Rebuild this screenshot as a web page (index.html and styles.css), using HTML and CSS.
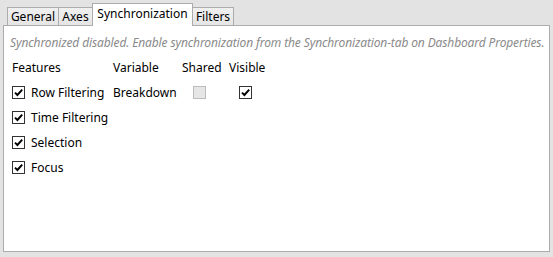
FILE: index.html
```html
<!DOCTYPE html>
<html lang="en">
<head>
    <meta charset="UTF-8">
    <title>Synchronization</title>
    <link rel="stylesheet" href="styles.css">
</head>
<body>
    <div class="window">
        <div class="tabstrip">
            <div class="tab tab-general">General</div>
            <div class="tab tab-axes">Axes</div>
            <div class="tab tab-sync selected">Synchronization</div>
            <div class="tab tab-filters">Filters</div>
        </div>

        <div class="panel">
            <p class="notice">Synchronized disabled. Enable synchronization from the Synchronization-tab on Dashboard Properties.</p>

            <div class="sync-grid">
                <div class="head">Features</div>
                <div class="head">Variable</div>
                <div class="head">Shared</div>
                <div class="head">Visible</div>

                <label class="feature"><span class="check on"></span>Row Filtering</label>
                <div class="cell">Breakdown</div>
                <div class="cell"><span class="check disabled shared-box"></span></div>
                <div class="cell"><span class="check on visible-box"></span></div>

                <label class="feature"><span class="check on"></span>Time Filtering</label>
                <div class="cell"></div>
                <div class="cell"></div>
                <div class="cell"></div>

                <label class="feature"><span class="check on"></span>Selection</label>
                <div class="cell"></div>
                <div class="cell"></div>
                <div class="cell"></div>

                <label class="feature"><span class="check on"></span>Focus</label>
                <div class="cell"></div>
                <div class="cell"></div>
                <div class="cell"></div>
            </div>
        </div>
    </div>
</body>
</html>
```

FILE: styles.css
```css
body {
    margin: 0;
    background-color: #e3e3e3;
    font-family: "Noto Sans", "Open Sans", sans-serif;
    font-size: 12px;
    color: #000;
}
.window {
    padding: 0 3px 6px 3px;
}
.tabstrip {
    display: flex;
    align-items: flex-end;
    height: 25px;
    padding-left: 4px;
}
.tab {
    height: 17px;
    line-height: 17px;
    border: 1px solid #acacac;
    border-bottom: none;
    background: linear-gradient(#f0f0f0, #e5e5e5);
    text-align: center;
    box-sizing: content-box;
    margin-right: -1px;
}
.tab-general { width: 50px; }
.tab-axes { width: 33px; }
.tab-sync { width: 99px; }
.tab-filters { width: 40px; }
.tab.selected {
    position: relative;
    z-index: 1;
    height: 22px;
    line-height: 20px;
    margin-bottom: -1px;
    background: #fff;
}
.panel {
    height: 225px;
    border: 1px solid #acacac;
    background: #fff;
    padding: 0 6px;
}
.notice {
    margin: 9px 0 0 0;
    line-height: 16px;
    font-style: italic;
    color: #8a8a8a;
    white-space: nowrap;
    letter-spacing: -0.12px;
}
.sync-grid {
    display: grid;
    grid-template-columns: 101px 69px 47px 1fr;
    grid-auto-rows: 25px;
    margin: 4px 0 0 2px;
    align-items: center;
}
.feature {
    display: flex;
    align-items: center;
    gap: 6px;
}
.check {
    display: inline-block;
    width: 11px;
    height: 11px;
    border: 1px solid #333;
    background: #fff;
    vertical-align: middle;
}
.check.on {
    background: #fff url("data:image/svg+xml,%3Csvg xmlns='http://www.w3.org/2000/svg' width='11' height='11'%3E%3Cpath d='M2 5.6 L4.4 8 L9.2 2.6' fill='none' stroke='%23000' stroke-width='1.9'/%3E%3C/svg%3E") no-repeat center;
}
.check.disabled {
    border-color: #bcbcbc;
    background: #e6e6e6;
}
.cell {
    display: flex;
    align-items: center;
}
.shared-box { margin-left: 11px; }
.visible-box { margin-left: 10px; }
```
